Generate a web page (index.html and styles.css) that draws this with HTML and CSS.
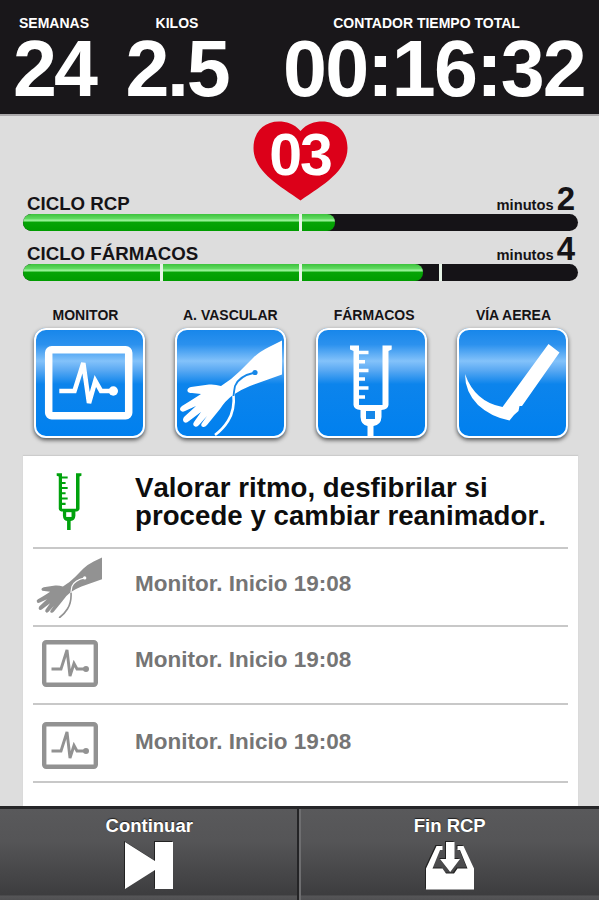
FILE: index.html
```html
<!doctype html>
<html lang="es">
<head>
  <meta charset="utf-8">
  <title>RCP</title>
  <link rel="stylesheet" href="styles.css">
</head>
<body>
<svg class="sprite">
  <symbol id="monitor" viewBox="0 0 110 110">
    <rect x="14.7" y="21.7" width="80" height="66" rx="3" fill="none" stroke="currentColor" stroke-width="7.5"/>
    <path d="M25.3 63H40.5L49.3 35L55 75L61.3 53L67 63H79" fill="none" stroke="currentColor" stroke-width="4.6"/>
    <circle cx="79.3" cy="63" r="4.7" fill="currentColor"/>
  </symbol>
  <symbol id="arm" viewBox="0 0 110 110">
    <path fill="currentColor" d="M107 12.5L94 19Q84 24 78 30L65 43Q56 52 46 58Q40 56 34 56.500L16 59Q12 60 12.500 63Q13 65 17 65L26 66Q20 70 7 78Q4 80 5.500 82.500Q7 84.500 10 83L21 78L9 89Q7 92 9 94Q11 96 14 93L26 84L19 94Q17 97 20 98.500Q22 99.500 24 97L32 88L27 95Q25 98 28 99Q30 99.500 32 97L45 81Q50 73 58 67Q65 62 75 58L107 46.500Z"/>
    <path d="M58.500 66Q60 82 53 93Q48 101 40 107" fill="none" stroke="currentColor" stroke-width="2.6"/>
    <path class="tube" d="M80 44.500Q64 48 60 58Q59 63 58.500 68" fill="none" stroke-width="1.8"/>
    <circle class="tube-end" cx="80" cy="44.500" r="2.6"/>
  </symbol>
  <symbol id="syringe" viewBox="0 0 110 113">
    <path fill="currentColor" d="M34 17.500H43V77H66.500V17.500H75.700V21.500L72.500 23V77Q72 81.500 65.500 82V89Q65 97 57.500 98V113H51.500V98Q45 97 44.500 89V82Q38 81.500 37.500 77V23L34 21.500Z"/>
    <path class="hole" d="M50 83H59V91H50Z"/>
    <path d="M42 24.500H52.500M42 33.700H49M42 42.400H52.500M42 51H49M42 60H52.500M42 69H49" stroke="currentColor" stroke-width="3.5"/>
  </symbol>
  <symbol id="check" viewBox="0 0 110 110">
    <path fill="currentColor" d="M8 46Q18 74 45.500 79L91.500 16L102.500 24.500L65 78H62.500L61.500 83L57 87L52.500 92.500Q34 89 21 77Q8 64 8 46Z"/>
  </symbol>
</svg>

<div class="screen">
  <header class="header">
    <div class="stat stat--weeks">
      <span class="stat__label">SEMANAS</span>
      <span class="stat__value">24</span>
    </div>
    <div class="stat stat--kilos">
      <span class="stat__label">KILOS</span>
      <span class="stat__value">2.5</span>
    </div>
    <div class="stat stat--total">
      <span class="stat__label">CONTADOR TIEMPO TOTAL</span>
      <span class="stat__value">00:16:32</span>
    </div>
  </header>

  <main class="content">
    <div class="heart">
      <svg class="heart__shape" viewBox="0 0 95 80">
        <path fill="#dc0019" d="M47.500 10C54 2.500 62 .5 69 .5C84 .5 94.500 11 94.500 27C94.500 50 70 64 47.500 79.500C25 64 .5 50 .5 27C.5 11 11 .5 26 .5C33 .5 41 2.500 47.500 10Z"/>
      </svg>
      <span class="heart__count">03</span>
    </div>

    <section class="cycle">
      <div class="cycle__head">
        <span class="cycle__name">CICLO RCP</span>
        <span class="cycle__time">minutos<b>2</b></span>
      </div>
      <div class="bar bar--two">
        <div class="bar__fill" style="width: 56.2%"></div>
        <div class="bar__ticks"><i></i><i></i></div>
      </div>
    </section>
    <section class="cycle">
      <div class="cycle__head">
        <span class="cycle__name">CICLO FÁRMACOS</span>
        <span class="cycle__time">minutos<b>4</b></span>
      </div>
      <div class="bar">
        <div class="bar__fill" style="width: 72%"></div>
        <div class="bar__ticks"><i></i><i></i><i></i><i></i></div>
      </div>
    </section>

    <nav class="actions">
      <a class="action action--monitor">
        <span class="action__label">MONITOR</span>
        <span class="tile"><svg><use href="#monitor"/></svg></span>
      </a>
      <a class="action">
        <span class="action__label">A. VASCULAR</span>
        <span class="tile"><svg><use href="#arm"/></svg></span>
      </a>
      <a class="action action--drugs">
        <span class="action__label">FÁRMACOS</span>
        <span class="tile"><svg class="tile__syringe"><use href="#syringe"/></svg></span>
      </a>
      <a class="action action--airway">
        <span class="action__label">VÍA AEREA</span>
        <span class="tile"><svg><use href="#check"/></svg></span>
      </a>
    </nav>

    <ul class="log">
      <li class="log__item log__item--current">
        <svg class="log__icon log__icon--syringe" viewBox="33 17 43.500 96"><use href="#syringe" width="110" height="113"/></svg>
        <p>Valorar ritmo, desfibrilar si<br>procede y cambiar reanimador.</p>
      </li>
      <li class="log__item log__item--second">
        <svg class="log__icon log__icon--arm" viewBox="4 12 103 95"><use href="#arm" width="110" height="110"/></svg>
        <p>Monitor. Inicio 19:08</p>
      </li>
      <li class="log__item log__item--third">
        <svg class="log__icon log__icon--monitor" viewBox="0 0 56 47">
          <rect x="2.200" y="2.200" width="51.600" height="42.600" rx="2" fill="none" stroke="currentColor" stroke-width="4.400"/>
          <path d="M9.500 29H19L25 10L28 36L32 23.500L35 29H44" fill="none" stroke="currentColor" stroke-width="2.900"/>
          <circle cx="44" cy="29" r="3" fill="currentColor"/>
        </svg>
        <p>Monitor. Inicio 19:08</p>
      </li>
      <li class="log__item log__item--fourth">
        <svg class="log__icon log__icon--monitor" viewBox="0 0 56 47">
          <rect x="2.200" y="2.200" width="51.600" height="42.600" rx="2" fill="none" stroke="currentColor" stroke-width="4.400"/>
          <path d="M9.500 29H19L25 10L28 36L32 23.500L35 29H44" fill="none" stroke="currentColor" stroke-width="2.900"/>
          <circle cx="44" cy="29" r="3" fill="currentColor"/>
        </svg>
        <p>Monitor. Inicio 19:08</p>
      </li>
    </ul>
  </main>

  <footer class="footer">
    <a class="footer__button">
      <span>Continuar</span>
      <svg viewBox="0 0 50 50"><path fill="#fff" d="M1 1L31 20V1H49V48H31V29L1 48Z"/></svg>
    </a>
    <a class="footer__button">
      <span>Fin RCP</span>
      <svg viewBox="0 0 50 50">
        <path fill="#fff" d="M1 27.500L11.500 5H17.500V9H15L7.500 27.500H17.500L21 32.500H29L32.500 27.500H42.500L35 9H32.500V5H38.500L49 27.500V48.500H1Z"/>
        <path fill="#fff" d="M21 1H29.500V18H35L25.200 31L15 18H21Z"/>
      </svg>
    </a>
  </footer>
</div>
</body>
</html>
```
FILE: styles.css
```css
* {
  box-sizing: border-box;
}

body {
  margin: 0;
  overflow: hidden;
  font-family: "Liberation Sans", Arial, Helvetica, sans-serif;
  font-weight: bold;
  color: #151316;
}

svg {
  display: block;
}

.sprite {
  display: none;
}

.screen {
  display: flex;
  flex-direction: column;
  width: 599px;
  height: 900px;
  background: #ddd;
}

/* header */

.header {
  display: flex;
  flex: none;
  height: 116px;
  padding-top: 15px;
  background: #19171a;
  border-bottom: 2px solid #aaa8aa;
  color: #fff;
}

.stat {
  display: flex;
  flex-direction: column;
  align-items: center;
  white-space: nowrap;
}

.stat--weeks {
  width: 108px;
}

.stat--kilos {
  width: 138px;
}

.stat--total {
  width: 353px;
}

.stat--total .stat__value {
  margin-left: 23px;
}

.stat--total .stat__label {
  margin-left: 8px;
}

.stat__label {
  font-size: 14px;
  line-height: 16px;
}

.stat__value {
  font-size: 79px;
  line-height: 76px;
  letter-spacing: -1.8px;
}

.stat--weeks .stat__value {
  letter-spacing: -3px;
}

.stat--kilos .stat__value {
  letter-spacing: -2.2px;
}

/* cycles */

.content {
  display: flex;
  flex: 1;
  flex-direction: column;
  min-height: 0;
  padding: 5px 21px 0 23px;
}

.heart {
  display: grid;
  place-items: center;
  align-self: center;
  width: 95px;
  height: 80px;
  margin: 0 0 -15px -1px;
}

.heart__shape,
.heart__count {
  grid-area: 1 / 1;
}

.heart__shape {
  width: 95px;
  height: 80px;
}

.heart__count {
  margin-top: -12px;
  color: #fff;
  font-size: 59px;
  line-height: 60px;
  letter-spacing: -2px;
}

.cycle {
  height: 50px;
}

.cycle__head {
  display: flex;
  justify-content: space-between;
  align-items: baseline;
  height: 28px;
  padding: 0 3px 0 4px;
  line-height: 26px;
}

.cycle__name {
  font-size: 18.7px;
}

.cycle__time {
  font-size: 14.7px;
}

.cycle__time b {
  margin-left: 3px;
  font-size: 33px;
}

.bar {
  position: relative;
  width: 555px;
  height: 17px;
  overflow: hidden;
  border-radius: 9px;
  background: #151317;
}

.bar__fill {
  height: 100%;
  border-radius: 0 8px 8px 0;
  background: linear-gradient(#3cc23c 0, #62da62 28%, #9bf39b 36%, #8aea8a 42%, #06a406 47%, #009c00 100%);
}

.bar__ticks {
  position: absolute;
  inset: 0;
  display: flex;
}

.bar__ticks i {
  flex: 1;
}

.bar__ticks i + i {
  border-left: 3px solid #e6f3e6;
}

/* action buttons */

.actions {
  display: flex;
  justify-content: space-between;
  padding: 21px 10px 0 11px;
}

.action {
  display: flex;
  flex-direction: column;
  align-items: center;
  width: 110px;
}

.action__label {
  font-size: 14px;
  line-height: 16px;
  white-space: nowrap;
}

.action--monitor .action__label {
  margin-left: -7px;
}

.action--drugs .action__label {
  margin-left: 5px;
}

.action--airway .action__label {
  margin-left: 1px;
}

.tile {
  width: 111px;
  height: 110px;
  margin-top: 5px;
  overflow: hidden;
  border-radius: 12px;
  background: linear-gradient(#1585ea 0, #2b91ee 15%, #83c2fa 30%, #5caaf3 38%, #0c84ec 51%, #0080ef 100%);
  box-shadow: inset 0 0 0 2px #fff, 0 2px 4px rgba(0, 0, 0, .65);
  color: #fff;
  --cutout: #1687e8;
}

.tile svg {
  width: 110px;
  height: 110px;
}

.tile .tile__syringe {
  height: 113px;
}

.tube {
  stroke: var(--cutout);
}

.tube-end,
.hole {
  fill: var(--cutout);
}

/* event log */

.log {
  flex: 1;
  width: 555px;
  margin: 18px 0 0;
  padding: 0 10px;
  list-style: none;
  background: #fff;
  box-shadow: 0 -1px 1px #ccc;
  --cutout: #fff;
}

.log__item {
  display: flex;
  align-items: center;
  height: 78px;
  border-bottom: 2px solid #c8c8c8;
  color: #757575;
  font-size: 22.5px;
}

.log__item p {
  margin: 0;
}

.log__item--current {
  height: 93px;
  color: #0d0d0d;
  font-size: 27.6px;
  line-height: 28px;
  font-kerning: none;
  letter-spacing: .05px;
}

.log__icon {
  flex: none;
  color: #929292;
}

.log__icon--syringe {
  width: 26px;
  height: 57px;
  margin: 0 53px 0 23px;
  color: #00a20d;
}

.log__icon--arm {
  width: 66px;
  height: 61px;
  margin: 0 33px 0 3px;
}

.log__icon--monitor {
  width: 56px;
  height: 47px;
  margin: 0 37px 0 9px;
}

.log__item--second p {
  padding-bottom: 6px;
}

.log__item--third .log__icon {
  margin-top: -4px;
}

.log__item--third p {
  padding-bottom: 10px;
}

.log__item--fourth .log__icon {
  margin-top: 4px;
}

.log__item--fourth p {
  padding-bottom: 2px;
}

/* footer */

.footer {
  display: flex;
  flex: none;
  height: 94px;
  border-top: 3px solid #262628;
  background: linear-gradient(#59595b, #555557 35%, #3d3d3f 94%, #555557 96%, #505052);
  color: #fff;
}

.footer__button {
  display: flex;
  flex: 1;
  flex-direction: column;
  align-items: center;
  padding-top: 6px;
  font-size: 18.5px;
  line-height: 21px;
  text-shadow: 0 -1px 1px #222;
}

.footer__button + .footer__button {
  border-left: 2px solid #6e6e70;
  box-shadow: -2px 0 0 #242426;
}

.footer__button svg {
  width: 50px;
  height: 50px;
  margin-top: 5px;
  filter: drop-shadow(-1px -1px 0 #222);
}
```
